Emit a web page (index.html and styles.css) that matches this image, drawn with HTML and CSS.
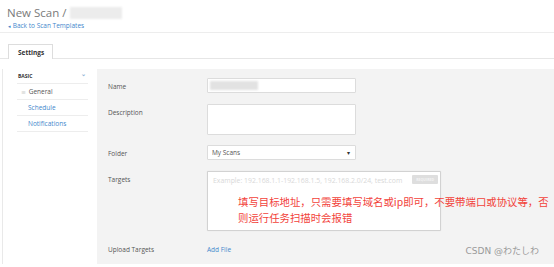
FILE: index.html
```html
<!DOCTYPE html>
<html lang="en">
<head>
    <meta charset="UTF-8">
    <meta name="viewport" content="width=device-width, initial-scale=1.0">
    <title>New Scan</title>
    <link rel="stylesheet" href="styles.css">
</head>
<body>
    <!-- Шапка сторінки -->
    <div class="header">
        <h1 class="title">New Scan / <span class="masked"></span></h1>
        <a class="back" href="#"><span class="back-arrow">&#9666;</span> Back to Scan Templates</a>
    </div>

    <!-- Вкладки -->
    <div class="tabs">
        <div class="tab">Settings</div>
    </div>

    <div class="main">
        <!-- Бічне меню -->
        <div class="sidebar">
            <div class="side-head">
                <span>BASIC</span>
                <span class="chev">&#8964;</span>
            </div>
            <div class="side-item active"><span class="dash">&#8801;</span> General</div>
            <div class="side-item link">Schedule</div>
            <div class="side-item link">Notifications</div>
        </div>

        <!-- Форма -->
        <div class="content">
            <div class="form">
                <label class="label">Name</label>
                <div class="input"><span class="masked small"></span></div>

                <label class="label">Description</label>
                <div class="input area"></div>

                <label class="label">Folder</label>
                <div class="input select">
                    <span>My Scans</span>
                    <span class="caret">&#9662;</span>
                </div>

                <label class="label">Targets</label>
                <div class="input targets">
                    <span class="placeholder">Example: 192.168.1.1-192.168.1.5, 192.168.2.0/24, test.com</span>
                    <span class="required">REQUIRED</span>
                </div>

                <label class="label">Upload Targets</label>
                <a class="add-file" href="#">Add File</a>
            </div>

            <!-- Примітка поверх скріншота -->
            <div class="note">填写目标地址，只需要填写域名或ip即可，不要带端口或协议等，否<br>则运行任务扫描时会报错</div>
            <div class="watermark">CSDN @わたしわ</div>
        </div>
    </div>
</body>
</html>
```

FILE: styles.css
```css
/* Основний стиль */
body {
    margin: 0;
    background-color: #ffffff;
    font-family: "Open Sans", "Noto Sans CJK SC", sans-serif;
    color: #555555;
}

/* Шапка */
.header {
    height: 33px;
    padding: 4px 7px 0;
    box-sizing: border-box;
    border-bottom: 1px solid #ededed;
}

.title {
    margin: 0;
    font-size: 11.5px;
    font-weight: 400;
    line-height: 17px;
    color: #7a7a7a;
    display: flex;
    align-items: center;
}

.masked {
    display: inline-block;
    width: 52px;
    height: 12px;
    margin-left: 4px;
    background-color: #ececec;
    filter: blur(1px);
}

.masked.small {
    width: 48px;
    height: 9px;
    margin: 0;
    background-color: #e2e2e2;
}

.back {
    display: block;
    font-size: 6.5px;
    line-height: 9px;
    color: #3f87cc;
    text-decoration: none;
    padding-left: 1px;
}

.back-arrow {
    font-size: 5px;
}

/* Вкладки */
.tabs {
    height: 26px;
    padding-left: 8px;
    box-sizing: border-box;
    border-bottom: 1px solid #e6e6e6;
    display: flex;
    align-items: flex-end;
}

.tab {
    width: 45px;
    height: 15px;
    box-sizing: border-box;
    border: 1px solid #dddddd;
    border-bottom: none;
    margin-bottom: -1px;
    background-color: #ffffff;
    padding-left: 9px;
    font-size: 6.5px;
    font-weight: 700;
    line-height: 16px;
    color: #333333;
}

/* Основна частина */
.main {
    display: flex;
    margin-top: 10px;
    margin-left: 2px;
    border-left: 1px solid #e9e9e9;
    height: 195px;
}

.sidebar {
    width: 94px;
    padding: 0 9px 0 14px;
    box-sizing: border-box;
    font-size: 6.5px;
}

.side-head {
    display: flex;
    justify-content: space-between;
    height: 14px;
    line-height: 14px;
    border-bottom: 1px solid #ededed;
    font-size: 5px;
    font-weight: 700;
    color: #333333;
    padding-left: 1px;
}

.chev {
    color: #8fb2d6;
    font-size: 6px;
    line-height: 10px;
    padding-right: 2px;
}

.side-item {
    height: 15px;
    line-height: 16px;
    border-bottom: 1px solid #ededed;
    padding-left: 11px;
}

.side-item.active {
    padding-left: 4px;
    color: #555555;
}

.dash {
    font-size: 5px;
    color: #999999;
    margin-right: 1px;
}

.side-item.link {
    color: #3f87cc;
}

/* Сіра область з формою */
.content {
    flex: 1;
    position: relative;
    background-color: #f3f3f3;
    padding: 9px 0 0 11px;
    box-sizing: border-box;
}

.form {
    display: grid;
    grid-template-columns: 99px 149px;
    row-gap: 10px;
    font-size: 6.5px;
}

.label {
    padding-top: 1px;
    line-height: 15px;
    color: #555555;
}

.input {
    height: 15px;
    box-sizing: border-box;
    border: 1px solid #dcdcdc;
    border-radius: 1px;
    background-color: #ffffff;
    display: flex;
    align-items: center;
    padding: 0 5px 0 2px;
}

.input.area {
    height: 31px;
}

.input.select {
    justify-content: space-between;
    padding-left: 4px;
    color: #555555;
}

.caret {
    font-size: 6px;
    color: #333333;
}

.input.targets {
    width: 234px;
    height: 60px;
    align-items: flex-start;
    justify-content: space-between;
    padding: 3px 2px 0 5px;
    border-color: #d2d2d2;
    box-shadow: 0 0 1px rgba(0, 0, 0, 0.15);
}

.placeholder {
    font-size: 6.9px;
    line-height: 12px;
    color: #d8d8d8;
    white-space: nowrap;
}

.required {
    flex-shrink: 0;
    background-color: #dedede;
    color: #f4f4f4;
    font-size: 3.5px;
    font-weight: 700;
    line-height: 9px;
    padding: 0 4px;
    border-radius: 1px;
}

.add-file {
    line-height: 15px;
    padding-top: 1px;
    color: #3f87cc;
    text-decoration: none;
}

/* Червона примітка */
.note {
    position: absolute;
    left: 141px;
    top: 125px;
    font-family: "Noto Sans CJK SC", sans-serif;
    font-size: 10.4px;
    line-height: 16px;
    color: #f2423a;
    white-space: nowrap;
}

.watermark {
    position: absolute;
    right: 15px;
    bottom: 7px;
    font-family: "DejaVu Sans", "Noto Sans CJK JP", sans-serif;
    font-size: 9px;
    color: #9a9a9a;
}
```
